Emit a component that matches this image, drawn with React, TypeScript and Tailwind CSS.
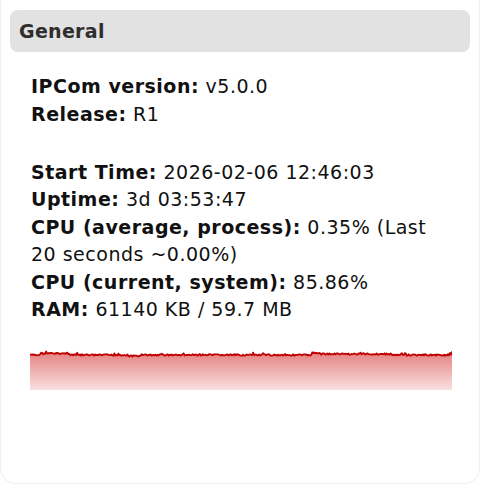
import React from "react";

// deterministic pseudo-noise for the usage trace
const buildTrace = () => {
  const pts: [number, number][] = [];
  let seed = 7;
  const rnd = () => {
    seed = (seed * 9301 + 49297) % 233280;
    return seed / 233280;
  };
  const n = 420;
  for (let i = 0; i <= n; i++) {
    const x = (i / n) * 422;
    let base = 5;
    if (i > 10 && i < 40) base = 3.5;
    if (i > 95 && i < 110) base = 6;
    if (i > 280 && i < 290) base = 3;
    if (i >= 290 && i < 360) base = 4;
    let y = base + (rnd() - 0.5) * 1.6;
    if (rnd() > 0.96) y -= 1.5;
    if (i === n) y = 1.5;
    pts.push([x, y]);
  }
  return pts;
};

const trace = buildTrace();
const linePts = trace.map(([x, y]) => `${x.toFixed(1)},${y.toFixed(1)}`).join(" ");
const areaPts = `0,40 ${linePts} 422,40`;

const Row: React.FC<{ label: string; children: React.ReactNode }> = ({ label, children }) => (
  <div>
    <span className="font-bold">{label}</span> {children}
  </div>
);

export default function App() {
  return (
    <div className="w-[480px] h-[484px] bg-white overflow-hidden">
      <div className="h-[484px] bg-white rounded-b-2xl border-x border-b border-[#f0f0f0] pt-[10px] px-[9px]">
        <div className="h-[42px] bg-[#e2e2e2] rounded-lg flex items-center pl-[9px]">
          <h2 className="text-[19px] font-bold tracking-[0.3px] text-[#2e2e2e] font-['DejaVu_Sans',sans-serif]">General</h2>
        </div>
        <div className="pl-[21px] pr-[20px] pt-[21px] text-[19px] leading-[27.5px] tracking-[0.5px] text-[#111] font-['DejaVu_Sans',sans-serif]">
          <Row label="IPCom version:">v5.0.0</Row>
          <Row label="Release:">R1</Row>
          <div className="h-[30.5px]" />
          <Row label="Start Time:">2026-02-06 12:46:03</Row>
          <Row label="Uptime:">3d 03:53:47</Row>
          <Row label="CPU (average, process):">0.35% (Last 20 seconds ~0.00%)</Row>
          <Row label="CPU (current, system):">85.86%</Row>
          <Row label="RAM:">61140 KB / 59.7 MB</Row>
        </div>
        <div className="pl-[20px] pt-[26px]">
          <svg width="422" height="40" viewBox="0 0 422 40" className="block">
            <defs>
              <linearGradient id="fillg" x1="0" y1="0" x2="0" y2="1">
                <stop offset="0%" stopColor="#cc0000" stopOpacity="0.5" />
                <stop offset="100%" stopColor="#cc0000" stopOpacity="0.12" />
              </linearGradient>
            </defs>
            <polygon points={areaPts} fill="url(#fillg)" />
            <polyline points={linePts} fill="none" stroke="#c00000" strokeWidth="1.8" strokeLinejoin="round" />
          </svg>
        </div>
      </div>
    </div>
  );
}
